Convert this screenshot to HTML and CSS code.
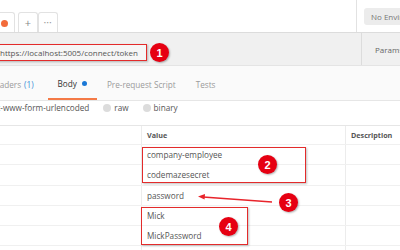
FILE: index.html
```html
<!DOCTYPE html>
<html>
<head>
<meta charset="utf-8">
<link rel="stylesheet" href="styles.css">
</head>
<body>
<div class="app">
  <div class="topbar">
    <div class="tabs-top">
      <div class="rtab active"><span class="dot"></span></div>
      <div class="rtab icon">+</div>
      <div class="rtab icon dots">&bull;&bull;&bull;</div>
    </div>
    <div class="env">
      <div class="env-select">No Environment</div>
    </div>
  </div>
  <div class="urlbar">
    <div class="url-wrap">
      <div class="url">https://localhost:5005/connect/token</div>
    </div>
    <div class="params">Params</div>
  </div>
  <div class="reqtabs">
    <div class="reqtab headers">Headers <span class="count">(1)</span></div>
    <div class="reqtab active">Body <span class="bdot"></span></div>
    <div class="reqtab">Pre-request Script</div>
    <div class="reqtab">Tests</div>
  </div>
  <div class="modes">
    <div class="mode first">x-www-form-urlencoded</div>
    <div class="mode"><span class="radio"></span>raw</div>
    <div class="mode"><span class="radio"></span>binary</div>
  </div>
  <div class="table">
    <div class="row head">
      <div class="cell key"></div>
      <div class="cell val">Value</div>
      <div class="cell desc">Description</div>
    </div>
    <div class="row"><div class="cell key"></div><div class="cell val">company-employee</div><div class="cell desc"></div></div>
    <div class="row"><div class="cell key"></div><div class="cell val">codemazesecret</div><div class="cell desc"></div></div>
    <div class="row"><div class="cell key"></div><div class="cell val">password</div><div class="cell desc"></div></div>
    <div class="row"><div class="cell key"></div><div class="cell val">Mick</div><div class="cell desc"></div></div>
    <div class="row"><div class="cell key"></div><div class="cell val">MickPassword</div><div class="cell desc"></div></div>
    <div class="row"><div class="cell key"></div><div class="cell val"></div><div class="cell desc"></div></div>
  </div>

  <div class="hl hl1"></div>
  <div class="hl hl2"></div>
  <div class="hl hl4"></div>
  <div class="badge b1">1</div>
  <div class="badge b2">2</div>
  <div class="badge b3">3</div>
  <div class="badge b4">4</div>
  <svg class="arrow" width="400" height="250" viewBox="0 0 400 250">
    <line x1="272" y1="202" x2="203" y2="197" stroke="#e8242b" stroke-width="1.3"/>
    <path d="M198 196.6 L205 194 L204.6 199.6 Z" fill="#e8242b"/>
  </svg>
</div>
</body>
</html>
```
FILE: styles.css
```css
* { box-sizing: border-box; }
html, body { margin: 0; padding: 0; }
body {
  width: 400px;
  height: 250px;
  overflow: hidden;
  background: #fff;
  font-family: "Open Sans", "Noto Sans", sans-serif;
  font-size: 8.2px;
  color: #505050;
}
.app { position: relative; width: 400px; height: 250px; overflow: hidden; }

.topbar {
  height: 33px;
  display: flex;
  border-bottom: 1px solid #dcdcdc;
  background: #fff;
}
.tabs-top {
  display: flex;
  align-items: flex-end;
  gap: 3px;
  margin-left: -20px;
}
.rtab {
  height: 20px;
  border: 1px solid #e2e2e2;
  border-bottom: none;
  border-radius: 3px 3px 0 0;
  display: flex;
  align-items: center;
  justify-content: center;
  color: #888;
  font-size: 11px;
}
.rtab.active { width: 35px; justify-content: flex-end; padding-right: 6px; padding-top: 2px; }
.rtab.icon { width: 20px; }
.rtab.icon + .rtab.icon { margin-left: -3px; }
.rtab.dots { font-size: 6px; letter-spacing: 0.5px; color: #999; }
.dot { width: 7px; height: 7px; border-radius: 50%; background: #f26b3a; }
.env {
  margin-left: auto;
  width: 44px;
  border-left: 1px solid #e2e2e2;
  padding: 8px 0 0 7px;
}
.env-select {
  height: 17px;
  background: #ececec;
  border-radius: 3px 0 0 3px;
  white-space: nowrap;
  overflow: hidden;
  padding-left: 7px;
  line-height: 17px;
  font-size: 8px;
  color: #777;
}

.urlbar {
  height: 33px;
  display: flex;
  background: #f0f0f0;
  border-bottom: 1px solid #e4e4e4;
}
.url-wrap { flex: 1; padding-top: 11px; }
.url {
  height: 17px;
  width: 146px;
  line-height: 17px;
  font-size: 8px;
  white-space: nowrap;
  overflow: hidden;
  color: #555;
  background: #f6f6f6;
}
.params {
  width: 39px;
  border-left: 1px solid #dcdcdc;
  padding-left: 13px;
  line-height: 33px;
  font-size: 8px;
  color: #666;
  white-space: nowrap;
  overflow: hidden;
}

.reqtabs {
  height: 35px;
  display: flex;
  background: #fafafa;
  border-bottom: 1px solid #e6e6e6;
  color: #9a9a9a;
  margin-left: -11px;
}
.reqtab {
  height: 100%;
  display: flex;
  align-items: center;
  padding: 2px 10px 0;
  white-space: nowrap;
  gap: 3px;
}
.reqtab.headers { padding-left: 0; padding-right: 14px; }
.count { color: #3a8fd8; }
.reqtab.active {
  color: #333;
  border-bottom: 2px solid #f47a46;
  padding: 2px 10px 0;
}
.bdot { width: 5px; height: 5px; border-radius: 50%; background: #1a78d6; margin-left: 2px; }

.modes {
  height: 25px;
  display: flex;
  align-items: flex-start;
  padding-top: 1px;
  line-height: 12px;
  gap: 14px;
  border-bottom: 1px solid #e6e6e6;
  margin-left: -4px;
  color: #555;
}
.mode { display: flex; align-items: center; gap: 3px; }
.radio { width: 8px; height: 8px; border-radius: 50%; background: #dcdcdc; }

.row {
  display: grid;
  grid-template-columns: 141px 204px 1fr;
  height: 20.3px;
  border-bottom: 1px solid #f0f0f0;
}
.row.head { height: 19px; font-weight: bold; font-size: 7.2px; color: #555; }
.cell { display: flex; align-items: center; padding-left: 5px; }
.cell.val, .cell.desc { border-left: 1px solid #ececec; }
.cell.val { color: #555; }

.hl {
  position: absolute;
  border: 1.5px solid #e32b2b;
  box-shadow: 1px 1px 2px rgba(0,0,0,0.25);
}
.hl1 { left: -3px; top: 44px; width: 150px; height: 17px; }
.hl2 { left: 142px; top: 147px; width: 164px; height: 36px; }
.hl4 { left: 141px; top: 207px; width: 107px; height: 38px; }
.badge {
  position: absolute;
  width: 19px;
  height: 19px;
  border-radius: 50%;
  background: #e60012;
  color: #fff;
  font-family: "Liberation Sans", Arial, sans-serif;
  font-size: 11px;
  font-weight: bold;
  display: flex;
  align-items: center;
  justify-content: center;
  box-shadow: 1px 1px 2px rgba(0,0,0,0.3);
}
.b1 { left: 150px; top: 43px; }
.b2 { left: 258px; top: 155px; }
.b3 { left: 279px; top: 193px; }
.b4 { left: 219px; top: 217px; }
.arrow { position: absolute; left: 0; top: 0; pointer-events: none; }
```
